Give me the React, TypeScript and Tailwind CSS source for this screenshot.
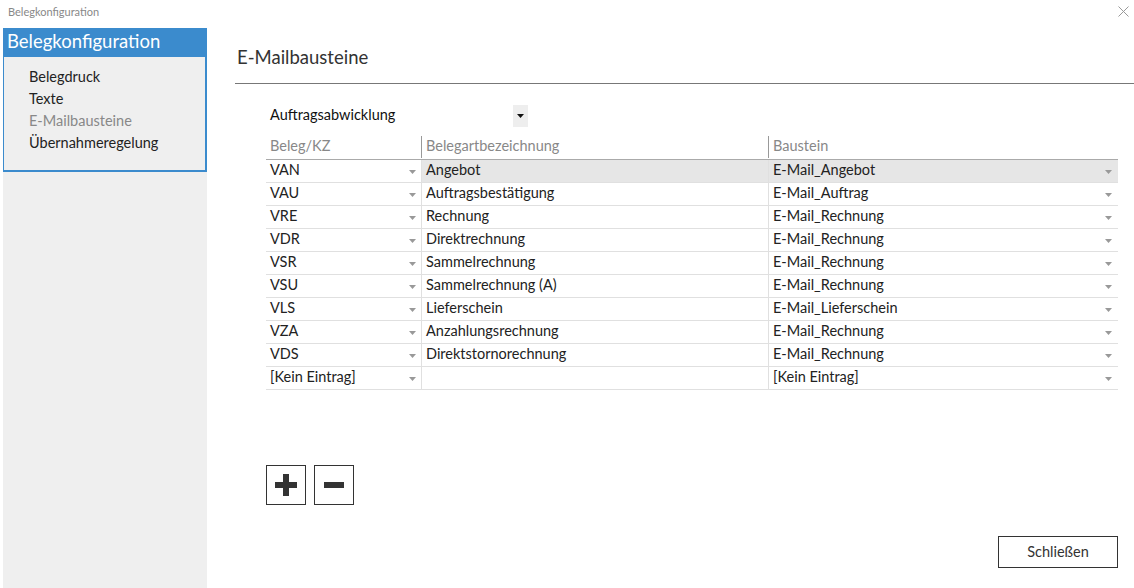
import React from 'react';

const rows = [
  { kz: 'VAN', name: 'Angebot', baustein: 'E-Mail_Angebot' },
  { kz: 'VAU', name: 'Auftragsbestätigung', baustein: 'E-Mail_Auftrag' },
  { kz: 'VRE', name: 'Rechnung', baustein: 'E-Mail_Rechnung' },
  { kz: 'VDR', name: 'Direktrechnung', baustein: 'E-Mail_Rechnung' },
  { kz: 'VSR', name: 'Sammelrechnung', baustein: 'E-Mail_Rechnung' },
  { kz: 'VSU', name: 'Sammelrechnung (A)', baustein: 'E-Mail_Rechnung' },
  { kz: 'VLS', name: 'Lieferschein', baustein: 'E-Mail_Lieferschein' },
  { kz: 'VZA', name: 'Anzahlungsrechnung', baustein: 'E-Mail_Rechnung' },
  { kz: 'VDS', name: 'Direktstornorechnung', baustein: 'E-Mail_Rechnung' },
  { kz: '[Kein Eintrag]', name: '', baustein: '[Kein Eintrag]' },
];

const navItems = ['Belegdruck', 'Texte', 'E-Mailbausteine', 'Übernahmeregelung'];

function Caret({ className = '' }: { className?: string }) {
  return (
    <svg width="7" height="4" viewBox="0 0 7 4" className={className}>
      <path d="M0 0h7L3.5 4z" fill="currentColor" />
    </svg>
  );
}

export default function App() {
  return (
    <div
      className="relative w-[1134px] h-[588px] bg-white overflow-hidden text-[#333] flex flex-col"
      style={{ fontFamily: 'Lato, "Noto Sans", sans-serif' }}
    >
      {/* title bar */}
      <div className="h-[28px] flex items-start justify-between pl-[8px] pr-[5px] pt-[5px] shrink-0">
        <span className="text-[11px] text-[#888] leading-[14px]">Belegkonfiguration</span>
        <svg width="11" height="11" viewBox="0 0 11 11" className="text-[#999] mt-[1px]">
          <path d="M0.5 0.5l10 10M10.5 0.5l-10 10" stroke="currentColor" strokeWidth="1" />
        </svg>
      </div>

      <div className="flex flex-1 min-h-0">
        {/* sidebar */}
        <div className="ml-[3px] w-[204px] bg-[#efefef] shrink-0">
          <div className="h-[29px] bg-[#3b8bcd] text-white text-[18.5px] leading-[26px] pl-[4px]">
            Belegkonfiguration
          </div>
          <div className="h-[115px] border-r-2 border-b-2 border-l border-[#3b8bcd] pt-[9px] pl-[25px] text-[14.5px]">
            {navItems.map((item) => (
              <div
                key={item}
                className={`h-[22px] leading-[22px] ${item === 'E-Mailbausteine' ? 'text-[#888]' : 'text-[#222]'}`}
              >
                {item}
              </div>
            ))}
          </div>
        </div>

        {/* main */}
        <div className="flex-1 pl-[28px] flex flex-col">
          <div className="h-[56px] border-b border-[#777] pt-[17px] pl-[2px]">
            <h1 className="text-[18.5px] leading-[24px] text-[#333]">E-Mailbausteine</h1>
          </div>

          <div className="ml-[31px] w-[852px]">
            {/* selector */}
            <div className="mt-[21px] w-[262px] h-[22px] flex items-center justify-between">
              <span className="pl-[4px] text-[14.5px] text-[#111] leading-[18px] pb-[3px]">Auftragsabwicklung</span>
              <div className="w-[15px] h-[22px] bg-[#eeeeee] flex items-center justify-center text-[#111]">
                <Caret />
              </div>
            </div>

            {/* table */}
            <div className="mt-[9px] text-[14.5px]">
              <div className="grid grid-cols-[155px_347px_350px] h-[24px] border-b border-[#aaa] text-[#888]">
                <div className="pl-[4px] leading-[20px]">Beleg/KZ</div>
                <div className="pl-[4px] leading-[20px] border-l border-[#999] h-[22px]">Belegartbezeichnung</div>
                <div className="pl-[4px] leading-[20px] border-l border-[#999] h-[22px]">Baustein</div>
              </div>
              {rows.map((r, i) => (
                <div
                  key={i}
                  className="grid grid-cols-[155px_347px_350px] h-[23px] border-b border-[#e0e0e0] text-[#222] leading-[20px]"
                >
                  <div className="pl-[4px] pr-[5px] flex items-center justify-between">
                    <span className="pb-[2px]">{r.kz}</span>
                    <Caret className="text-[#999] mt-[2px]" />
                  </div>
                  <div className={`pl-[4px] pb-[2px] flex items-center border-l border-[#e0e0e0] ${i === 0 ? 'bg-[#e6e6e6]' : ''}`}>
                    {r.name}
                  </div>
                  <div
                    className={`pl-[4px] pr-[6px] flex items-center justify-between border-l border-[#e0e0e0] ${i === 0 ? 'bg-[#e6e6e6]' : ''}`}
                  >
                    <span className="pb-[2px]">{r.baustein}</span>
                    <Caret className="text-[#999] mt-[2px]" />
                  </div>
                </div>
              ))}
            </div>

            {/* plus / minus */}
            <div className="mt-[75px] flex gap-[8px]">
              <button className="w-[40px] h-[40px] border border-[#333] flex items-center justify-center">
                <svg width="24" height="24" viewBox="0 0 24 24">
                  <path d="M9 1h6v8h8v6h-8v8H9v-8H1V9h8z" fill="#333" />
                </svg>
              </button>
              <button className="w-[40px] h-[40px] border border-[#333] flex items-center justify-center">
                <svg width="24" height="24" viewBox="0 0 24 24">
                  <path d="M2 9h20v6H2z" fill="#333" />
                </svg>
              </button>
            </div>
          </div>

          <div className="mt-[31px] flex justify-end pr-[16px]">
            <button className="w-[120px] h-[32px] border border-[#333] text-[14.5px] text-[#333]">
              Schließen
            </button>
          </div>
        </div>
      </div>
    </div>
  );
}
